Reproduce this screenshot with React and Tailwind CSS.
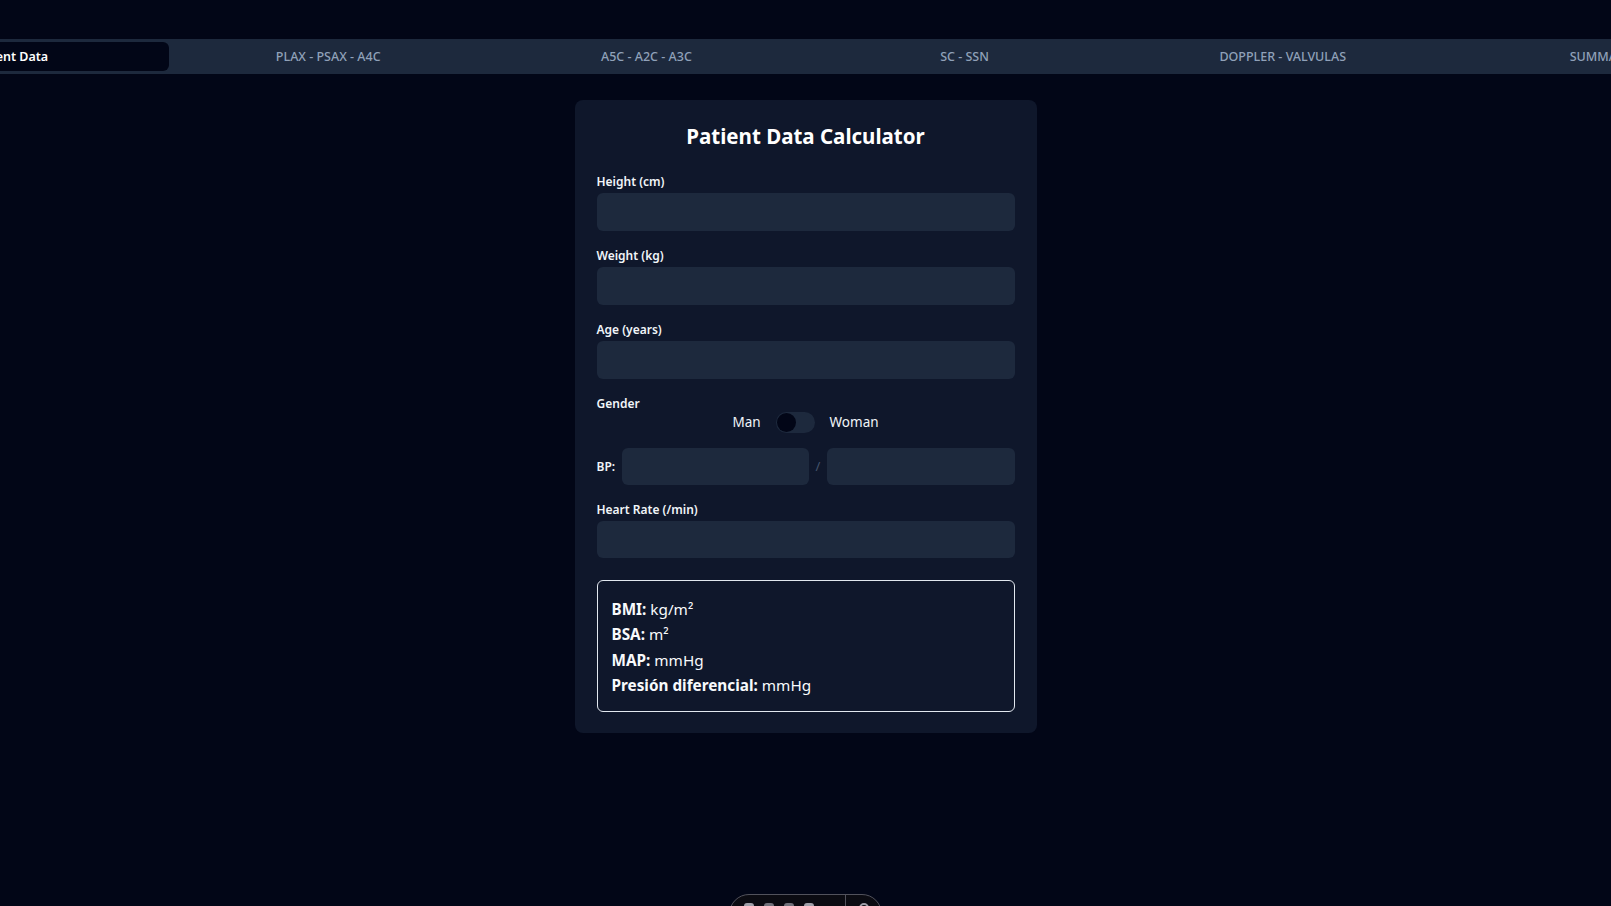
import React, { useState } from 'react';

const tabs = ['Patient Data', 'PLAX - PSAX - A4C', 'A5C - A2C - A3C', 'SC - SSN', 'DOPPLER - VALVULAS', 'SUMMARY'];

function Field({ label, value, onChange }) {
  return (
    <div className="mb-4">
      <label className="block text-[12px] leading-4 pt-[1px] font-semibold text-slate-100">{label}</label>
      <input
        type="number"
        value={value}
        onChange={(e) => onChange(e.target.value)}
        className="block w-full h-[38px] mt-[3px] rounded-md bg-slate-800 px-3 text-sm text-white outline-none"
      />
    </div>
  );
}

export default function App() {
  const [activeTab, setActiveTab] = useState(0);
  const [height, setHeight] = useState('');
  const [weight, setWeight] = useState('');
  const [age, setAge] = useState('');
  const [woman, setWoman] = useState(false);
  const [sys, setSys] = useState('');
  const [dia, setDia] = useState('');
  const [hr, setHr] = useState('');

  return (
    <div className="min-h-screen bg-[#020617] text-white overflow-hidden relative" style={{ fontFamily: '"Noto Sans", "Open Sans", sans-serif' }}>
      {/* tab bar */}
      <div className="pt-[39px] flex justify-center">
        <div className="shrink-0 w-[1911px] grid grid-cols-6 bg-slate-800 h-[35px] px-[1px] py-[3px]">
          {tabs.map((t, i) => (
            <button
              key={t}
              onClick={() => setActiveTab(i)}
              className={
                i === activeTab
                  ? 'rounded-md bg-[#020617] text-white text-[12.5px] font-semibold pt-[1px]'
                  : 'rounded-md text-slate-400 text-[12.5px] font-medium pt-[1px]'
              }
            >
              {t}
            </button>
          ))}
        </div>
      </div>

      {/* calculator card */}
      <div className="flex justify-center pt-[26px]">
        <div className="w-[462px] bg-slate-900 rounded-lg px-[22px] pt-[22px] pb-[21px]">
          <h1 className="text-center text-[20.5px] leading-7 font-bold mb-[23px]">Patient Data Calculator</h1>

          <Field label="Height (cm)" value={height} onChange={setHeight} />
          <Field label="Weight (kg)" value={weight} onChange={setWeight} />
          <Field label="Age (years)" value={age} onChange={setAge} />

          <div>
            <div className="text-[12px] leading-4 pt-[1px] font-semibold text-slate-100">Gender</div>
            <div className="flex items-center justify-center gap-[15px] h-[21px]">
              <span className="text-[13.5px] text-slate-100">Man</span>
              <button
                onClick={() => setWoman(!woman)}
                className="w-[39px] h-[21px] rounded-full bg-slate-800 flex items-center px-[1px]"
              >
                <span className={woman ? 'block w-[19px] h-[19px] rounded-full bg-[#020617] ml-[18px]' : 'block w-[19px] h-[19px] rounded-full bg-[#020617]'} />
              </button>
              <span className="text-[13.5px] text-slate-100">Woman</span>
            </div>
          </div>

          <div className="flex items-center mt-[15px] mb-4">
            <span className="text-[12px] font-semibold text-slate-100 w-[25px] pt-[1px]">BP:</span>
            <input
              type="number"
              value={sys}
              onChange={(e) => setSys(e.target.value)}
              className="flex-1 min-w-0 h-[37px] rounded-md bg-slate-800 px-3 text-sm text-white outline-none"
            />
            <span className="mx-[7px] text-slate-600 text-[13px]">/</span>
            <input
              type="number"
              value={dia}
              onChange={(e) => setDia(e.target.value)}
              className="flex-1 min-w-0 h-[37px] rounded-md bg-slate-800 px-3 text-sm text-white outline-none"
            />
          </div>

          <div>
            <label className="block text-[12px] leading-4 pt-[1px] font-semibold text-slate-100">Heart Rate (/min)</label>
            <input
              type="number"
              value={hr}
              onChange={(e) => setHr(e.target.value)}
              className="block w-full h-[37px] mt-[3px] rounded-md bg-slate-800 px-3 text-sm text-white outline-none"
            />
          </div>

          <div className="mt-[22px] border border-slate-200 rounded-md px-[14px] pt-[16px] pb-[12px] text-[15.3px] leading-[25.4px] text-slate-50">
            <p><b>BMI:</b> kg/m²</p>
            <p><b>BSA:</b> m²</p>
            <p><b>MAP:</b> mmHg</p>
            <p><b>Presión diferencial:</b> mmHg</p>
          </div>
        </div>
      </div>

      {/* dev toolbar peeking at bottom */}
      <div className="absolute left-[729px] top-[894px] w-[153px] h-[40px] rounded-full border border-zinc-600 bg-[#0b0b12] flex items-start">
        <div className="w-[116px] h-full border-r border-zinc-600 flex gap-[10px] pl-[14px] pt-[8px]">
          <span className="block w-[10px] h-[6px] bg-zinc-400 rounded-sm" />
          <span className="block w-[10px] h-[6px] bg-zinc-500 rounded-sm" />
          <span className="block w-[10px] h-[6px] bg-zinc-500 rounded-sm" />
          <span className="block w-[10px] h-[6px] bg-zinc-400 rounded-sm" />
        </div>
        <div className="flex-1 flex justify-center pt-[8px]">
          <span className="block w-[10px] h-[10px] border-2 border-zinc-400 rounded-full" />
        </div>
      </div>
    </div>
  );
}
